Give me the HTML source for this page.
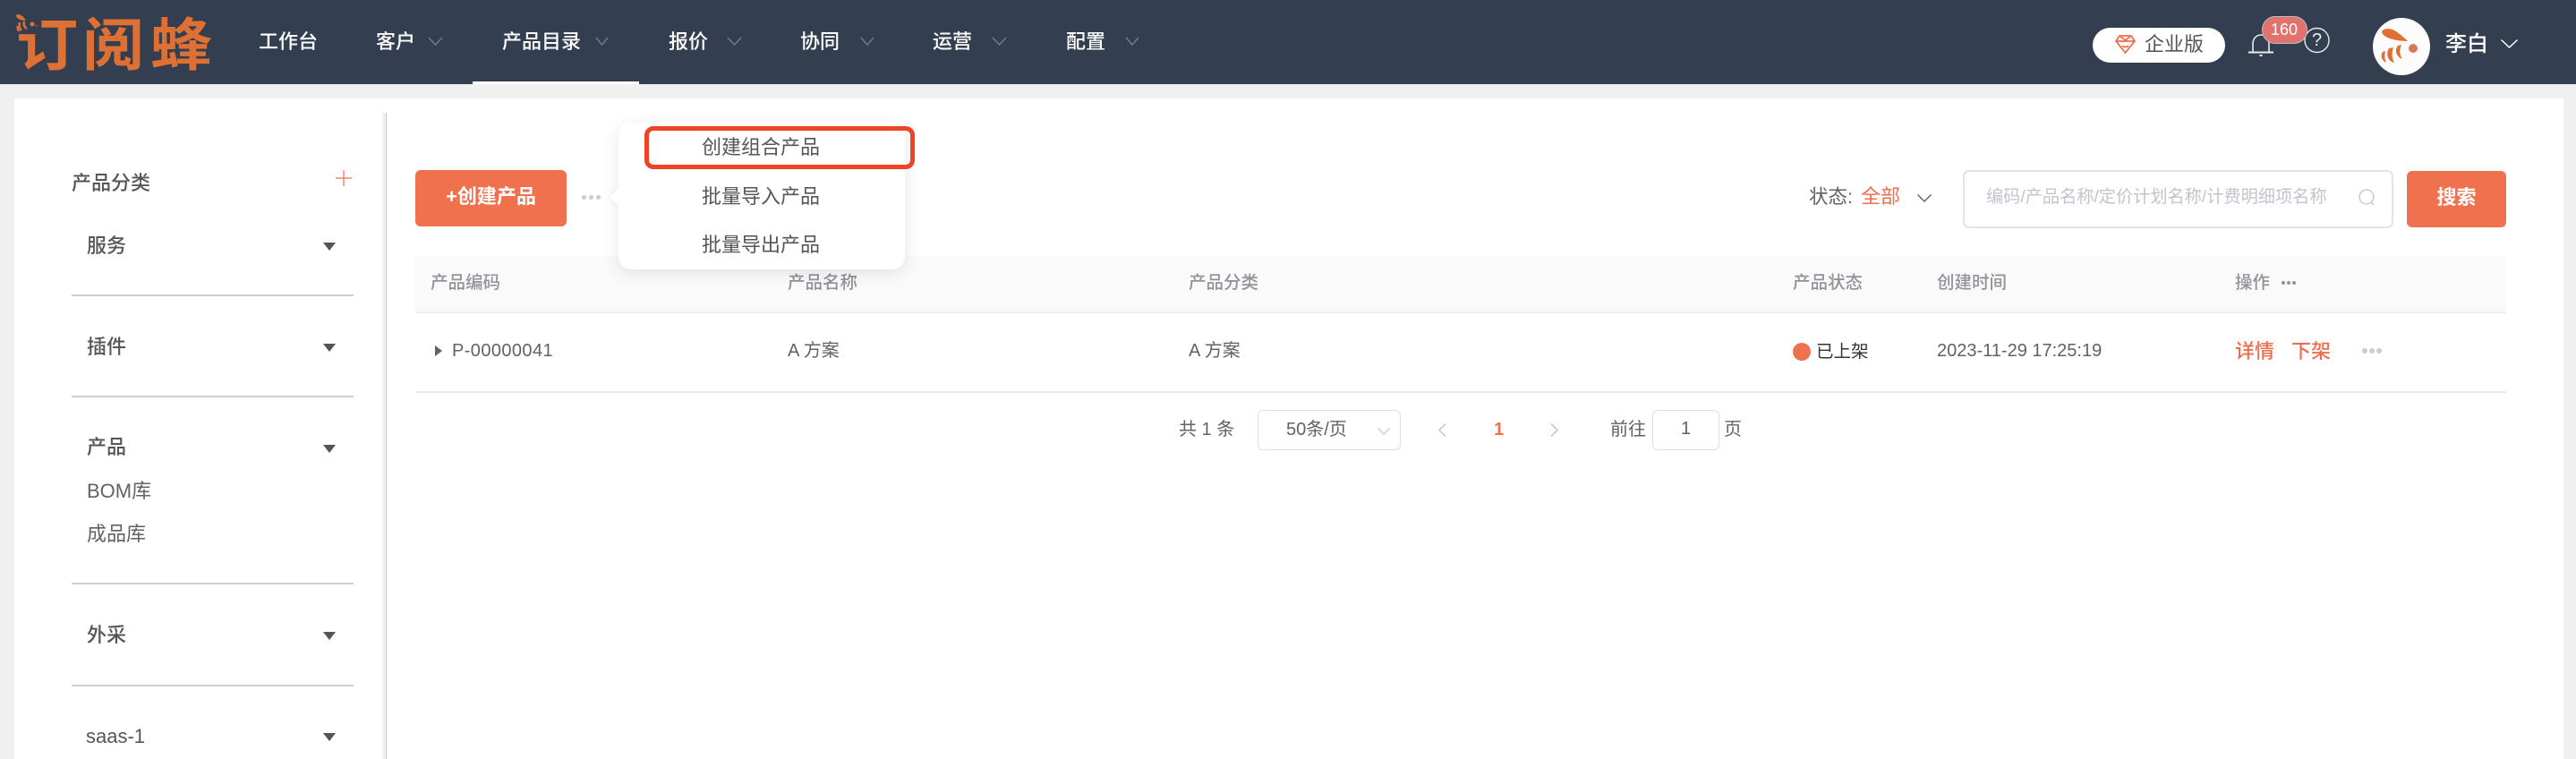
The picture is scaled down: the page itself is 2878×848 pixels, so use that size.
<!DOCTYPE html>
<html lang="zh-CN">
<head>
<meta charset="utf-8">
<title>产品目录</title>
<style>
html,body{margin:0;padding:0;width:2878px;height:848px;overflow:hidden;background:#f0f0f0;}
body{position:relative;font-family:"Liberation Sans","Noto Sans CJK SC",sans-serif;color:#555;}
.a{position:absolute;}
.t{position:absolute;white-space:nowrap;line-height:40px;height:40px;font-size:22px;}
.n{color:#fff;font-weight:500;}
.s{color:#555;font-weight:500;}
.h{color:#909399;font-size:19.5px;font-weight:500;}
.r{color:#606266;font-size:20px;}
.o{color:#ef6f4c;}
.l{position:absolute;left:80px;width:315px;height:2px;background:#cfcfcf;}
.tri{position:absolute;left:361px;width:0;height:0;border-left:7px solid transparent;border-right:7px solid transparent;border-top:9px solid #555;}
svg{position:absolute;overflow:visible;}
.dots i{position:absolute;top:0;width:5px;height:5px;border-radius:50%;background:#ccc;}
.logo{position:absolute;white-space:nowrap;height:72px;line-height:72px;top:15px;font-size:64px;font-weight:700;color:#de7034;transform:scaleX(1.08);transform-origin:0 50%;}
</style>
</head>
<body>
<div class="a" style="left:0;top:0;width:2878px;height:94px;background:#333f50;"></div>
<div class="a" style="left:16px;top:110px;width:2848px;height:738px;background:#fff;"></div>

<!-- logo -->
<div class="logo" style="left:18px;">订</div>
<div class="logo" style="left:92px;">阅</div>
<div class="logo" style="left:168px;">蜂</div>
<div class="a" style="left:16px;top:14px;width:24px;height:24px;background:#333f50;"></div>
<svg style="left:0;top:0" width="60" height="50" viewBox="0 0 60 50">
<path d="M18 17C20 15 25 16 29 23C24 23 18 21 18 17Z" fill="#de7034"/>
<circle cx="36" cy="27" r="2.5" fill="#de7034"/>
<path d="M27 24C26 27 27 30 30 32M22 25C21 28 22 32 24 34M20 29C19 31 20 33 21 35" fill="none" stroke="#de7034" stroke-width="2.4"/>
</svg>

<!-- nav -->
<div class="t n" style="left:289px;top:27px;">工作台</div>
<div class="t n" style="left:420px;top:27px;">客户</div>
<div class="t n" style="left:561px;top:27px;">产品目录</div>
<div class="t n" style="left:747px;top:27px;">报价</div>
<div class="t n" style="left:894px;top:27px;">协同</div>
<div class="t n" style="left:1042px;top:27px;">运营</div>
<div class="t n" style="left:1191px;top:27px;">配置</div>
<svg style="left:0;top:0" width="1300" height="94" fill="none" stroke="#6f7a89" stroke-width="1.5">
<path d="M479 42l7.500 8 7.500-8M666 42l6.500 8 6.500-8M813 42l7.500 8 7.500-8M962 42l7 8 7-8M1109 42l7.500 8 7.500-8M1258 42l7 8 7-8"/>
</svg>
<div class="a" style="left:528px;top:91px;width:186px;height:3px;background:#fff;"></div>

<!-- header right -->
<div class="a" style="left:2338px;top:31px;width:148px;height:39px;border-radius:20px;background:#fff;"></div>
<svg style="left:2363px;top:39px" width="23" height="21" viewBox="0 0 23 21" fill="none" stroke="#ef6f4c" stroke-width="1.800">
<path d="M5 1H18L22 7L11.500 20L1 7Z"/><path d="M1 7H22M5 1L11.500 6L18 1"/><path d="M8 12C9.500 14 13.500 14 15 12"/>
</svg>
<div class="t" style="left:2396px;top:30px;color:#555;">企业版</div>
<svg style="left:2512px;top:37px" width="28" height="26" viewBox="0 0 28 26" fill="none" stroke="#e8eaed" stroke-width="1.600">
<path d="M5 21V12C5 6 9 2 14 2S23 6 23 12V21"/><path d="M0 21.500H28" stroke-width="2"/><path d="M12.500 25H15.500" stroke-width="2"/>
</svg>
<svg style="left:2574px;top:31px" width="29" height="28" viewBox="0 0 29 28" fill="none" stroke="#e8eaed" stroke-width="1.400">
<circle cx="14.500" cy="14" r="13.500"/>
</svg>
<div class="t" style="left:2583px;top:25px;color:#e8eaed;font-size:20px;">?</div>
<div class="a" style="left:2527px;top:18px;width:49px;height:29px;border-radius:15px;background:#e2726e;border:1px solid #b9bcc2;"></div>
<div class="t" style="left:2537px;top:13px;color:#fff;font-size:18px;">160</div>
<div class="a" style="left:2651px;top:20px;width:64px;height:64px;border-radius:50%;background:#fcfcfc;"></div>
<svg style="left:2651px;top:20px" width="64" height="64" viewBox="0 0 64 64">
<path d="M10 16C11 11 20 11 26 15C30 18 35 22 39 26C30 26 13 24 10 16Z" fill="#de7034"/>
<circle cx="45" cy="34" r="5" fill="#d9775f"/>
<path d="M28 31C24 36 26 43 33 46C29 40 30 35 32 30ZM18 34C14 40 17 49 24 50C21 45 21 38 23 33ZM11 38C8 42 10 48 15 50C13 46 13 41 14 37Z" fill="#de7034"/>
</svg>
<div class="t n" style="left:2732px;top:30px;font-size:24px;">李白</div>
<svg style="left:2794px;top:44px" width="19" height="10" fill="none" stroke="#fff" stroke-width="1.500"><path d="M0.500 0.500L9.500 9L18.500 0.500"/></svg>

<!-- sidebar -->
<div class="t s" style="left:80px;top:185px;">产品分类</div>
<svg style="left:375px;top:190px" width="18" height="18" stroke="#ef6f4c" stroke-width="1.200"><path d="M0 9H18M9 0V18"/></svg>
<div class="t s" style="left:97px;top:255px;">服务</div><div class="tri" style="top:271px;"></div>
<div class="l" style="top:329px;"></div>
<div class="t s" style="left:97px;top:368px;">插件</div><div class="tri" style="top:384px;"></div>
<div class="l" style="top:442px;"></div>
<div class="t s" style="left:97px;top:480px;">产品</div><div class="tri" style="top:497px;"></div>
<div class="t" style="left:97px;top:529px;color:#606266;">BOM库</div>
<div class="t" style="left:97px;top:577px;color:#606266;">成品库</div>
<div class="l" style="top:651px;"></div>
<div class="t s" style="left:97px;top:690px;">外采</div><div class="tri" style="top:706px;"></div>
<div class="l" style="top:765px;"></div>
<div class="t s" style="left:96px;top:803px;">saas-1</div><div class="tri" style="top:819px;"></div>

<div class="a" style="left:427px;top:126px;width:4px;height:722px;background:#f0f0f0;"></div>
<div class="a" style="left:431px;top:126px;width:1px;height:722px;background:#c8c8c8;"></div>

<!-- toolbar -->
<div class="a" style="left:464px;top:190px;width:169px;height:63px;border-radius:6px;background:#ef714e;"></div>
<div class="t" style="left:464px;top:200px;width:169px;text-align:center;color:#fff;font-weight:700;">+创建产品</div>
<div class="a dots" style="left:650px;top:218px;"><i style="left:0"></i><i style="left:8px"></i><i style="left:16px"></i></div>

<div class="t" style="left:2021px;top:200px;color:#606266;font-size:21.500px;">状态:</div>
<div class="t o" style="left:2079px;top:200px;">全部</div>
<svg style="left:2142px;top:217px" width="16" height="9" fill="none" stroke="#606266" stroke-width="1.400"><path d="M0.500 0.500L8 8L15.500 0.500"/></svg>
<div class="a" style="left:2193px;top:190px;width:477px;height:61px;border:2px solid #e2e4ea;border-radius:7px;background:#fff;"></div>
<div class="t" style="left:2219px;top:201px;font-size:19.200px;color:#c0c4cc;">编码/产品名称/定价计划名称/计费明细项名称</div>
<svg style="left:2635px;top:211px" width="20" height="19" fill="none" stroke="#c8cbd2" stroke-width="1.500"><circle cx="9" cy="9" r="8"/><path d="M14.500 15L17 18"/></svg>
<div class="a" style="left:2689px;top:191px;width:111px;height:63px;border-radius:6px;background:#ef714e;"></div>
<div class="t" style="left:2689px;top:201px;width:111px;text-align:center;color:#fff;font-weight:700;">搜索</div>

<!-- table -->
<div class="a" style="left:464px;top:286px;width:2336px;height:62px;background:#fafafa;"></div>
<div class="a" style="left:464px;top:348px;width:2336px;height:2px;background:#ebeef5;"></div>
<div class="t h" style="left:481px;top:296px;">产品编码</div>
<div class="t h" style="left:880px;top:296px;">产品名称</div>
<div class="t h" style="left:1328px;top:296px;">产品分类</div>
<div class="t h" style="left:2003px;top:296px;">产品状态</div>
<div class="t h" style="left:2164px;top:296px;">创建时间</div>
<div class="t h" style="left:2497px;top:296px;">操作</div>
<div class="a dots" style="left:2549px;top:314px;"><i style="left:0;background:#909399;width:4px;height:4px"></i><i style="left:6px;background:#909399;width:4px;height:4px"></i><i style="left:12px;background:#909399;width:4px;height:4px"></i></div>

<div class="a" style="left:486px;top:386px;width:0;height:0;border-top:6px solid transparent;border-bottom:6px solid transparent;border-left:8px solid #606266;"></div>
<div class="t r" style="left:505px;top:372px;letter-spacing:.4px;">P-00000041</div>
<div class="t r" style="left:880px;top:372px;">A 方案</div>
<div class="t r" style="left:1328px;top:372px;">A 方案</div>
<div class="a" style="left:2003px;top:383px;width:20px;height:20px;border-radius:50%;background:#ef714e;"></div>
<div class="t" style="left:2029px;top:373px;font-size:19.500px;color:#333;">已上架</div>
<div class="t r" style="left:2164px;top:372px;">2023-11-29 17:25:19</div>
<div class="t o" style="left:2497px;top:373px;font-weight:500;">详情</div>
<div class="t o" style="left:2560px;top:373px;font-weight:500;">下架</div>
<div class="a dots" style="left:2639px;top:389px;"><i style="left:0;width:6px;height:6px"></i><i style="left:8px;width:6px;height:6px"></i><i style="left:16px;width:6px;height:6px"></i></div>
<div class="a" style="left:464px;top:437px;width:2336px;height:2px;background:#e9ecf2;"></div>

<!-- pagination -->
<div class="t r" style="left:1317px;top:460px;">共 1 条</div>
<div class="a" style="left:1405px;top:458px;width:158px;height:43px;border:1px solid #dcdfe6;border-radius:6px;"></div>
<div class="t r" style="left:1437px;top:460px;">50条/页</div>
<svg style="left:1539px;top:478px" width="14" height="8" fill="none" stroke="#c0c4cc" stroke-width="1.200"><path d="M0.500 0.500L7 7L13.500 0.500"/></svg>
<svg style="left:1607px;top:473px" width="9" height="15" fill="none" stroke="#c0c4cc" stroke-width="1.500"><path d="M8 0.500L1 7.500L8 14.500"/></svg>
<div class="t o" style="left:1669px;top:460px;font-size:20px;font-weight:700;">1</div>
<svg style="left:1732px;top:473px" width="9" height="15" fill="none" stroke="#c0c4cc" stroke-width="1.500"><path d="M1 0.500L8 7.500L1 14.500"/></svg>
<div class="t r" style="left:1799px;top:460px;">前往</div>
<div class="a" style="left:1846px;top:458px;width:73px;height:43px;border:1px solid #dcdfe6;border-radius:6px;"></div>
<div class="t r" style="left:1846px;top:459px;width:75px;text-align:center;">1</div>
<div class="t r" style="left:1926px;top:460px;">页</div>

<!-- popover -->
<div class="a" style="left:691px;top:137px;width:320px;height:164px;border-radius:14px;background:#fff;box-shadow:0 4px 18px rgba(0,0,0,.10);"></div>
<div class="a" style="left:684px;top:213px;width:14px;height:14px;background:#fff;transform:rotate(45deg);box-shadow:-2px 2px 4px rgba(0,0,0,.04);"></div>
<div class="a" style="left:720px;top:141px;width:292px;height:38px;border:5px solid #ee4425;border-radius:10px;"></div>
<div class="t" style="left:784px;top:145px;color:#555;">创建组合产品</div>
<div class="t" style="left:784px;top:200px;color:#555;">批量导入产品</div>
<div class="t" style="left:784px;top:254px;color:#555;">批量导出产品</div>
</body>
</html>
